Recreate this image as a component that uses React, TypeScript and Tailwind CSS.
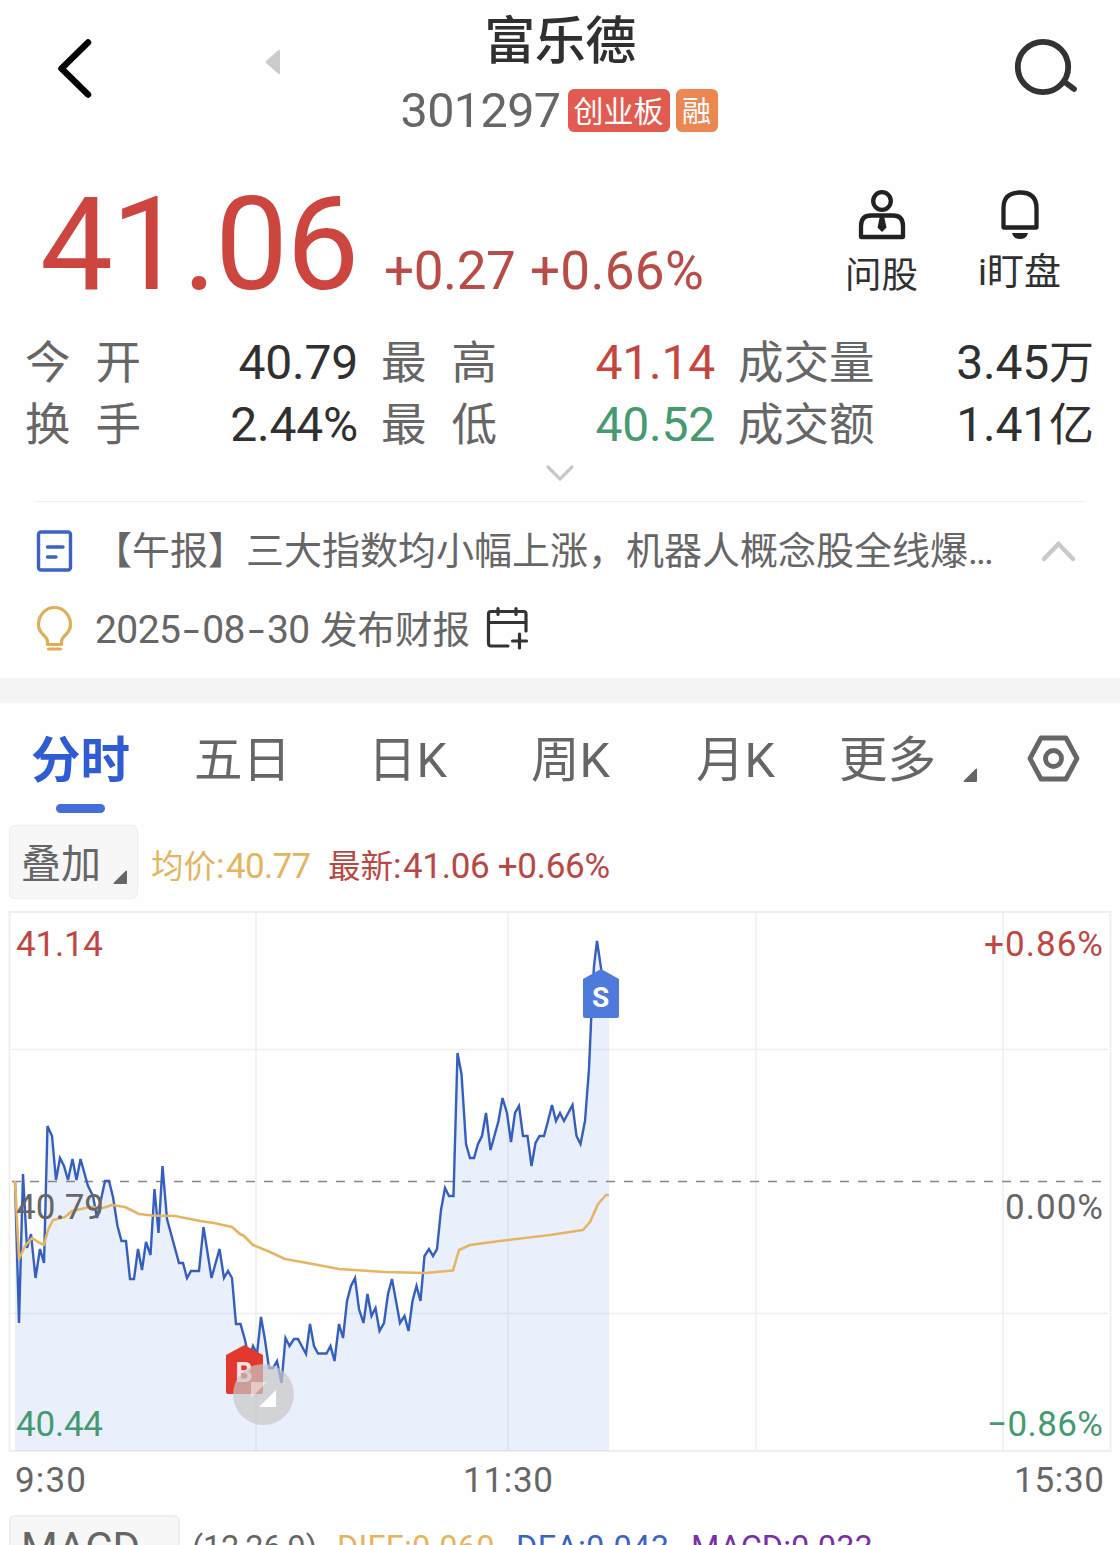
import React from 'react';

const PRICE_POINTS: [number, number][] = [
  [15, 1181], [19, 1323], [23, 1174], [27, 1248], [31, 1234], [35.5, 1278], [40, 1249], [44, 1263],
  [47.5, 1126], [52, 1136], [56, 1180], [60, 1158], [64, 1166], [68, 1180], [72.5, 1159], [76.5, 1180],
  [80.5, 1159], [88, 1186], [93, 1196], [97, 1218], [105, 1181], [109, 1181], [113, 1197], [117.5, 1226],
  [121.5, 1241], [126, 1241], [130, 1279], [134, 1279], [138, 1249], [142, 1270], [146, 1242], [150.5, 1255],
  [154.5, 1189], [158.5, 1233], [162.5, 1166], [167, 1219], [179, 1263], [183, 1263], [187, 1278], [191, 1271],
  [199, 1271], [203.5, 1227], [211.5, 1278], [219.5, 1249], [224, 1278], [228, 1271], [232, 1278], [236, 1324],
  [240.5, 1324], [245, 1340], [249, 1359], [253, 1346], [257, 1354], [261, 1317], [265, 1340], [269, 1368],
  [273, 1368], [277, 1361], [281.5, 1383], [285.5, 1338], [289.5, 1346], [294, 1339], [298, 1339], [306, 1354],
  [310, 1324], [314, 1346], [318, 1353.5], [326.5, 1353.5], [330.5, 1346], [334.5, 1361], [339, 1324], [343, 1338],
  [347, 1301], [351, 1286], [355, 1278], [359, 1309], [363.5, 1323], [367.5, 1294], [371.5, 1316], [375.5, 1308],
  [379.5, 1331], [384, 1323], [388, 1294], [392, 1279], [400, 1323], [404.5, 1316], [408.5, 1331], [412.5, 1301],
  [416.5, 1286], [420.5, 1301], [424.5, 1256], [429, 1249], [433, 1256], [437, 1249], [441, 1210], [445, 1188],
  [449, 1196], [453.5, 1196], [457.5, 1053], [461.5, 1074], [466, 1144], [470, 1158], [474, 1158], [478, 1144],
  [482, 1136], [486, 1113], [490.5, 1150], [498.5, 1121], [502.5, 1098], [507, 1113], [511, 1142], [515, 1113],
  [519, 1106], [523, 1136], [527.5, 1136], [531.5, 1166], [535.5, 1143], [539.5, 1136], [544, 1136], [548, 1121],
  [552, 1105], [556, 1121], [560, 1113], [564, 1121], [572.5, 1105], [576.5, 1136], [580.5, 1144], [585, 1121],
  [589, 1069], [592, 1000], [594, 966], [597, 941], [601, 968], [605, 1010], [609, 1000],
];

const AVG_POINTS: [number, number][] = [
  [15, 1181], [19, 1259], [25, 1246], [32, 1238], [38, 1242], [44, 1245], [48, 1230], [53, 1220],
  [65, 1217], [72, 1211], [90, 1207], [103, 1208], [112, 1205], [125, 1207], [139, 1214], [152, 1215.5],
  [175, 1216], [200, 1221], [214, 1223], [232, 1227], [240, 1234], [244, 1236], [253, 1245], [270, 1252], [285, 1259],
  [310, 1263.5], [339, 1269], [385, 1272], [425, 1273], [453, 1270.5], [459, 1250], [470, 1245], [500, 1241],
  [550, 1235], [583, 1230], [590, 1222], [598, 1204], [606, 1195], [609, 1195],
];

const toLine = (points: [number, number][]) => points.map(p => p.join(',')).join(' ');

const STATS = [
  [
    { label: '今开', value: '40.79', tone: 'text-[#303030]' },
    { label: '最高', value: '41.14', tone: 'text-[#c5463f]' },
    { label: '成交量', value: '3.45', unit: '万', tone: 'text-[#303030]' },
  ],
  [
    { label: '换手', value: '2.44%', tone: 'text-[#303030]' },
    { label: '最低', value: '40.52', tone: 'text-[#459a70]' },
    { label: '成交额', value: '1.41', unit: '亿', tone: 'text-[#303030]' },
  ],
];

const Header = () => (
  <header className="grid h-[160px] grid-cols-[400px_320px_400px]">
    <div className="flex items-start pl-[56px]">
      <svg className="mt-[36px]" width="38" height="65" viewBox="0 0 38 65" fill="none" stroke="#000" strokeWidth="6.5" strokeLinecap="round" strokeLinejoin="round">
        <path d="M32 6.500L5.500 32.500L32 58.500" />
      </svg>
      <svg className="mt-[49px] ml-[171px]" width="16" height="26" viewBox="0 0 16 26" fill="#cbcbcb">
        <path d="M15 1.500V24.500Q15 26 13 24.500L1 14Q0 13 1 12L13 1.500Q15 0 15 1.500Z" />
      </svg>
    </div>
    <div className="flex flex-col items-center">
      <h1 className="mt-[12px] h-[60px] text-[51px] leading-[60px] font-medium tracking-[-0.5px] whitespace-nowrap text-[#303030]">富乐德</h1>
      <div className="mt-[17px] mr-[2px] flex h-[43px] items-center">
        <span className="w-[167px] text-[48.500px] leading-[45px] tracking-[-0.6px] text-[#666]">301297</span>
        <span className="flex h-[43px] w-[102px] items-center justify-center rounded-[6px] bg-[#e25b50] pt-[3px] text-[30px] leading-none text-white">创业板</span>
        <span className="ml-[6px] flex h-[43px] w-[42px] items-center justify-center rounded-[6px] bg-[#ec8751] pt-[4px] text-[29px] leading-none text-white">融</span>
      </div>
    </div>
    <div className="flex items-start justify-end pr-[40px]">
      <svg className="mt-[36px]" width="66" height="62" viewBox="0 0 66 62" fill="none" stroke="#333" strokeWidth="5.8" strokeLinecap="round">
        <circle cx="29" cy="31" r="25.200" />
        <path d="M50 45.500L60 53" />
      </svg>
    </div>
  </header>
);

const Quote = () => (
  <section className="flex h-[170px] items-start">
    <div className="flex w-[821px] items-baseline pt-[3px] pl-[40px]">
      <span className="w-[344px] text-[130px] leading-[164px] tracking-[-1.8px] whitespace-nowrap text-[#cd453f]">41.06</span>
      <span className="w-[146px] text-[53px] tracking-[-0.4px] whitespace-nowrap text-[#b94c47]">+0.27</span>
      <span className="text-[53px] tracking-[0.3px] whitespace-nowrap text-[#b94c47]">+0.66%</span>
    </div>
    <div className="flex w-[121px] flex-col items-center pt-[29px]">
      <svg width="50" height="52" viewBox="0 0 50 52" fill="none" stroke="#222" strokeWidth="4.300" strokeLinejoin="round">
        <ellipse cx="25" cy="12" rx="8.800" ry="8.800" />
        <path d="M4 48V37Q4 26.500 14 26.500H36Q46 26.500 46 37V48Z" />
        <path d="M23 27h4l2.500 11.500L25 43l-4.500-4.500z" fill="#222" stroke="none" />
      </svg>
      <span className="mt-[8px] text-[36.500px] leading-[54px] text-[#303030]">问股</span>
    </div>
    <div className="flex w-[155px] flex-col items-center pt-[29px]">
      <svg width="44" height="52" viewBox="0 0 44 52" fill="none" stroke="#222" strokeWidth="4.300" strokeLinejoin="round">
        <path d="M5.500 38.500V19Q5.500 3.500 22 3.500T38.500 19V38.500Z" />
        <path d="M14 44h16q-1.500 6-8 6t-8-6z" fill="#222" stroke="none" />
      </svg>
      <span className="mt-[5px] text-[37px] leading-[54px] whitespace-nowrap text-[#303030]">i盯盘</span>
    </div>
  </section>
);

const Stats = () => (
  <section className="flex h-[171px] flex-col pt-[2px]">
    {STATS.map((row, i) => (
      <div key={i} className="grid h-[62px] grid-cols-[333px_23px_334px_23px_356px] items-center pl-[25px] leading-[62px]">
        {row.map((cell, j) => (
          <React.Fragment key={cell.label}>
            {j > 0 && <span />}
            <div className="flex items-baseline justify-between whitespace-nowrap">
              <span className={j < 2 ? 'flex gap-[25px] text-[45.5px] text-[#666]' : 'text-[45.5px] text-[#666]'}>
                {j < 2 ? cell.label.split('').map(c => <span key={c}>{c}</span>) : cell.label}
              </span>
              <span className={`text-[48px] tracking-[-0.2px] ${cell.tone}`}>
                {cell.value}
                {cell.unit && <span className="text-[45px] tracking-normal">{cell.unit}</span>}
              </span>
            </div>
          </React.Fragment>
        ))}
      </div>
    ))}
    <svg className="mx-auto mt-[7px]" width="30" height="20" viewBox="0 0 30 20" fill="none" stroke="#c8c8c8" strokeWidth="3.200" strokeLinecap="round">
      <path d="M3 4L15 16L27 4" />
    </svg>
  </section>
);

// the hyphen is stretched to line up with the tabular digits
const Dash = () => <span className="inline-block w-[22px] scale-x-[1.500] text-center">-</span>;

const News = () => (
  <section className="mx-[35px] h-[177px] border-t border-[#eee] text-[38px] text-[#666]">
    <div className="flex h-[98px] items-center">
      <svg className="ml-[1px]" width="38" height="44" viewBox="0 0 38 44" fill="none" stroke="#3a63c4" strokeWidth="3.400" strokeLinecap="round">
        <rect x="2.500" y="3" width="32" height="38" rx="2.500" />
        <path d="M11.500 18H27M11.500 28H20" />
      </svg>
      <span className="ml-[20px] w-[908px] whitespace-nowrap">【午报】三大指数均小幅上涨，机器人概念股全线爆<span className="tracking-[-2px]">...</span></span>
      <svg className="ml-[38px]" width="38" height="24" viewBox="0 0 38 24" fill="none" stroke="#c9c9c9" strokeWidth="4.500" strokeLinecap="round">
        <path d="M4 20L18.500 5L33 20" />
      </svg>
    </div>
    <div className="flex h-[60px] items-center">
      <svg className="mb-[4px] ml-[1px]" width="38" height="46" viewBox="0 0 38 46" fill="none" stroke="#e0ae55" strokeWidth="3.200" strokeLinecap="round" strokeLinejoin="round">
        <path d="M11.500 39.500V36Q11 33 7 29.500Q2.500 25 2.500 19.500A16 17 0 0 1 34.500 19.500Q34.500 25 30 29.500Q26 33 25.500 36V39.500ZM12.500 44H24.500" />
      </svg>
      <span className="ml-[21px] w-[225px] text-[39px] tracking-[-0.6px] whitespace-nowrap">2025<Dash />08<Dash />30</span>
      <span className="w-[165px] text-[37.5px] whitespace-nowrap">发布财报</span>
      <svg className="mb-[4px]" width="44" height="44" viewBox="0 0 44 44" fill="none" stroke="#333" strokeWidth="3.200" strokeLinecap="round">
        <path d="M41 25V8Q41 5.500 38.500 5.500H6Q3.500 5.500 3.500 8V37Q3.500 40 6 40H23M3.500 16.500H41M13 2.500V8.500M31 2.500V8.500M34.500 28V42M27.500 35H41.500" />
      </svg>
    </div>
  </section>
);

const Corner = ({ className }: { className: string }) => (
  <svg className={className} width="15" height="15" viewBox="0 0 15 15" fill="#666">
    <path d="M14 1V13Q14 14 13 14H1Q0 14 1 12.500L12.500 1Q14 0 14 1Z" />
  </svg>
);

const Tabs = () => (
  <nav className="flex h-[122px] items-start pt-[23px] text-[48.500px] leading-[70px] whitespace-nowrap text-[#666]">
    <div className="ml-[31px] flex w-[163px] flex-col text-[#2f5bd3]">
      <span className="text-[49.500px] font-bold">分时</span>
      <span className="mt-[8px] ml-[25px] h-[9px] w-[49px] rounded-full bg-[#446ed9]" />
    </div>
    <span className="w-[174px]">五日</span>
    <span className="w-[163px]">日K</span>
    <span className="w-[165px]">周K</span>
    <span className="w-[143px]">月K</span>
    <span className="w-[124px]">更多</span>
    <Corner className="mt-[42px]" />
    <svg className="mt-[7px] ml-[48px]" width="54" height="52" viewBox="0 0 54 52" fill="none" stroke="#666" strokeWidth="4.800" strokeLinejoin="round">
      <path d="M15 5H40L51 25.500L40 46H15L4 25.500Z" />
      <circle cx="27.500" cy="25.500" r="8" />
    </svg>
  </nav>
);

const Legend = () => (
  <div className="flex h-[86px] items-start pl-[9px] text-[35px] leading-[84px] whitespace-nowrap">
    <button className="flex h-[74px] w-[129px] rounded-[6px] border border-[#eee] bg-[#f7f7f7] pl-[11px] text-[40px] leading-[78px] text-[#666]">
      叠加
      <Corner className="mt-[44px] ml-[12px]" />
    </button>
    <span className="ml-[13px] w-[177px] text-[#e4b55f]"><span className="text-[32.500px]">均价</span><span className="tracking-[1.5px]">:</span><span className="tracking-[-0.7px]">40.77</span></span>
    <span className="text-[#b94743]"><span className="text-[32.500px]">最新</span><span className="tracking-[1.5px]">:</span><span className="tracking-[-0.3px]">41.06 +0.66%</span></span>
  </div>
);

const Chart = () => (
  <svg className="block" width="1120" height="604" viewBox="0 911 1120 604">
    <g fill="none" stroke="#efefef" strokeWidth="2">
      <rect x="9.500" y="912" width="1101" height="539" />
      <path d="M12 1049.500H1108M12 1313.500H1108M256 912V1451M508 912V1451M756 912V1451M1003 912V1451" strokeWidth="1.600" />
    </g>
    <polygon points={`15,1451 ${toLine(PRICE_POINTS)} 609,1451`} fill="#3c6df0" fillOpacity="0.1" />
    <path d="M12 1181.500H1104" stroke="#888" strokeWidth="1.300" strokeDasharray="9 9" />
    <polyline points={toLine(PRICE_POINTS)} fill="none" stroke="#345fbe" strokeWidth="2.400" />
    <polyline points={toLine(AVG_POINTS)} fill="none" stroke="#e6b564" strokeWidth="2.600" strokeLinejoin="round" />
    <g fontSize="35" fill="#666">
      <text x="16" y="956" textLength="87" fill="#c04641">41.14</text>
      <text x="16" y="1219" textLength="88">40.79</text>
      <text x="16" y="1436" textLength="87" fill="#459a70">40.44</text>
      <text x="984" y="956" textLength="119" fill="#c04641">+0.86%</text>
      <text x="1005" y="1219" textLength="98">0.00%</text>
      <text x="987" y="1436" textLength="116" fill="#459a70">−0.86%</text>
      <text x="15" y="1492" textLength="71">9:30</text>
      <text x="463" y="1492" textLength="90">11:30</text>
      <text x="1014" y="1492" textLength="90">15:30</text>
    </g>

    {/* sell / buy markers */}
    <path d="M601 969L619 979V1016Q619 1018 617 1018H585Q583 1018 583 1016V979Z" fill="#4e7adc" />
    <text x="600.500" y="1007" fontSize="28" fontWeight="700" textAnchor="middle" fill="#fff">S</text>
    <path d="M244.500 1345L263 1355V1392Q263 1394 261 1394H228Q226 1394 226 1392V1355Z" fill="#e2382e" />
    <text x="244" y="1382" fontSize="27" fontWeight="700" textAnchor="middle" fill="#f6e3e2">B</text>

    {/* expand button */}
    <circle cx="263.500" cy="1394.500" r="30.500" fill="#c8c8c8" fillOpacity="0.7" />
    <path d="M276 1390V1407H259Z" fill="#fff" />
    <path d="M251 1398V1382H267Z" fill="#fff" fillOpacity="0.45" />
  </svg>
);

const Macd = () => (
  <div className="flex h-[60px] items-start pl-[9px] text-[32.500px] leading-[66px] whitespace-nowrap">
    <div className="h-[74px] w-[171px] rounded-[6px] border-2 border-[#eee] bg-[#f7f7f7] pl-[10px] text-[42px] leading-[62px] text-[#666]">MACD</div>
    <span className="ml-[12px] w-[145px] tracking-[-0.2px] text-[#666]">(12,26,9)</span>
    <span className="w-[179px] tracking-[0.2px] text-[#e4b55f]">DIFF:0.060</span>
    <span className="w-[175px] tracking-[0.3px] text-[#3a63c4]">DEA:0.043</span>
    <span className="text-[#7a2fa8]">MACD:0.033</span>
  </div>
);

const App = () => (
  <main className="h-[1545px] w-[1120px] overflow-hidden bg-[#fefefe] font-[Roboto,'Noto_Sans_CJK_SC',sans-serif]">
    <Header />
    <Quote />
    <Stats />
    <News />
    <div className="h-[25px] bg-[#f4f4f4]" />
    <Tabs />
    <Legend />
    <Chart />
    <Macd />
  </main>
);

export default App;
